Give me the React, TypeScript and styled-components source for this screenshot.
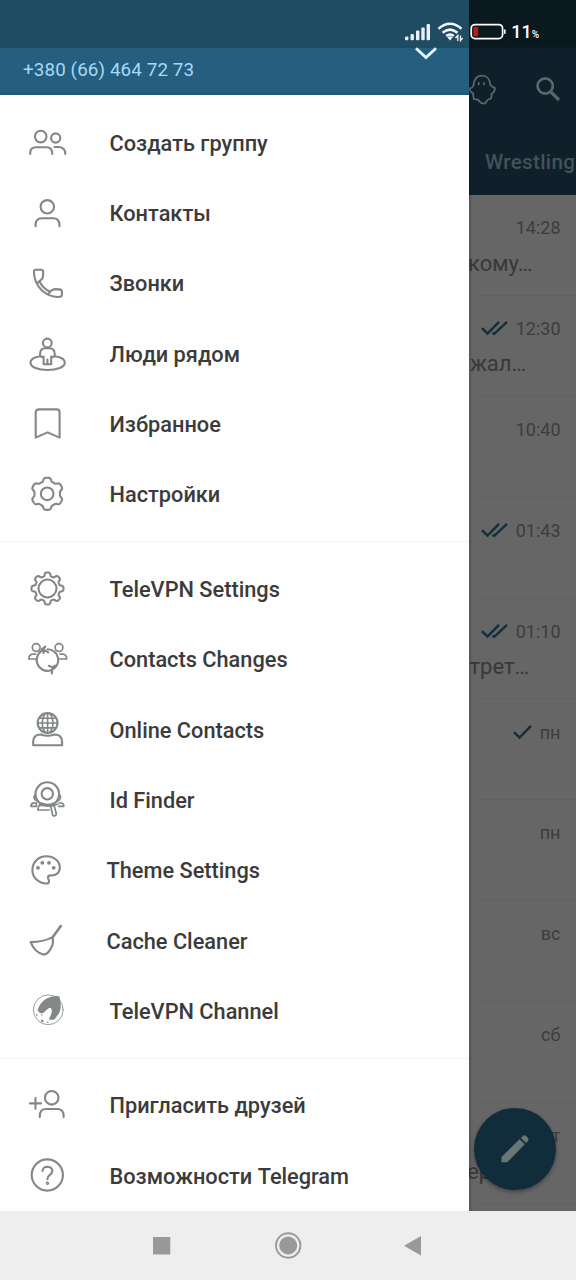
import React from 'react';
import styled, { createGlobalStyle } from 'styled-components';

const GlobalStyle = createGlobalStyle`
  *, *::before, *::after { box-sizing: border-box; }
  body { margin: 0; font-family: Roboto, sans-serif; background: #fff; }
  svg { display: block; overflow: visible; }
`;

const Screen = styled.div`
  position: relative;
  width: 576px;
  height: 1280px;
  overflow: hidden;
  display: flex;
  flex-direction: column;
`;

const Content = styled.div`
  display: flex;
  height: 1211px;
`;

const Drawer = styled.aside`
  width: 469px;
  flex: none;
  background: #fefefe;
`;

const Account = styled.header`
  height: 95px;
  padding-top: 48px;
  background: linear-gradient(#1f4c63 48px, #245f80 48px);
  border-bottom: 2px solid #25566f;
`;

const AccountRow = styled.div`
  display: flex;
  justify-content: space-between;
  padding: 0 32px 0 23px;
`;

const Phone = styled.span`
  font-size: 18.8px;
  line-height: 44px;
  letter-spacing: 0.12px;
  color: #a5d9f5;
`;

const Menu = styled.nav`
  padding-top: 13.6px;
`;

const MenuGroup = styled.div`
  & + & {
    margin-top: 10.5px;
    padding-top: 12.6px;
    border-top: 1px solid #f4f4f4;
  }
`;

const MenuItem = styled.div`
  display: flex;
  align-items: center;
  height: 70.35px;
  padding-left: 23px;
`;

const MenuIcon = styled.svg`
  width: 48px;
  height: 48px;
  flex: none;
  fill: none;
  stroke: #838788;
  stroke-width: 2.1;
  stroke-linecap: round;
  stroke-linejoin: round;
`;

const MenuLabel = styled.span<{ $shift?: number }>`
  margin-left: ${(p) => 38.5 - (p.$shift ?? 0)}px;
  font-size: 21.75px;
  font-weight: 500;
  line-height: 30px;
  color: #3b3b3b;
  white-space: nowrap;
`;

const Chats = styled.main`
  position: relative;
  width: 107px;
  overflow: hidden;
  background: #666;
`;

const DrawerShadow = styled.div`
  position: absolute;
  inset: 0 auto 0 0;
  width: 4px;
  background: linear-gradient(90deg, rgba(0, 0, 0, 0.18), transparent);
`;

const ChatsHeader = styled.header`
  height: 195px;
  padding-top: 48px;
  background: linear-gradient(#0a1920 46px, #0f202a 50px);
`;

const Actions = styled.div`
  display: flex;
  align-items: center;
  justify-content: space-between;
  height: 82px;
  padding-right: 15px;
`;

const Tab = styled.div`
  padding-left: 16px;
  font-size: 20.7px;
  font-weight: 500;
  line-height: 64px;
  letter-spacing: 0.3px;
  color: #465158;
  white-space: nowrap;
`;

const ChatRow = styled.div`
  height: 100.9px;
  padding-top: 20.6px;
  background: linear-gradient(#616161, #616161) 11px 100% / 100% 1px no-repeat;
`;

const Meta = styled.div`
  display: flex;
  align-items: center;
  justify-content: flex-end;
  gap: 8px;
  height: 24px;
  padding-right: 15.5px;
  font-size: 18px;
  color: #3d3d3d;
`;

const Preview = styled.div<{ $shift: number }>`
  margin: 9px 0 0 ${(p) => p.$shift}px;
  font-size: 22px;
  line-height: 30px;
  color: #383838;
  white-space: nowrap;
`;

const Compose = styled.div`
  position: absolute;
  left: 5px;
  top: 1108px;
  width: 82px;
  height: 82px;
  display: grid;
  place-items: center;
  border-radius: 50%;
  background: #112d3b;
  box-shadow: 0 2px 4px rgba(0, 0, 0, 0.35);
`;

const StatusBar = styled.div`
  position: absolute;
  top: 20px;
  right: 37px;
  height: 24px;
  display: flex;
  align-items: center;
  color: #fff;
`;

const Percent = styled.span`
  margin-left: 5px;
  margin-top: -1px;
  font-size: 18px;
  font-weight: 500;
  small { font-size: 10px; }
`;

const NavBar = styled.footer`
  height: 69px;
  flex: none;
  display: flex;
  justify-content: center;
  background: #eee;
`;

/** Outline of a cog with rounded teeth, the first one pointing up. */
function cog(cx: number, cy: number, teeth: number, mid: number, amp: number, sharp: number) {
  const pts: string[] = [];
  for (let i = 0; i < 240; i++) {
    const t = (i / 240) * Math.PI * 2;
    const r = mid + amp * Math.tanh(sharp * (Math.cos(teeth * t) + 0.05));
    pts.push(`${(cx + r * Math.sin(t)).toFixed(2)},${(cy - r * Math.cos(t)).toFixed(2)}`);
  }
  return `M${pts.join('L')}Z`;
}

const icons: Record<string, React.ReactNode> = {
  group: (
    <>
      <circle cx="17.7" cy="16.6" r="5.8" />
      <circle cx="32.7" cy="18" r="4.6" />
      <path d="M7.2 34V33Q7.2 27.2 13 27.2H23.5Q29.3 27.2 29.3 34M31.5 27H35Q42.3 27 42.3 34" />
    </>
  ),
  person: (
    <>
      <circle cx="24.3" cy="16.8" r="6.7" />
      <path d="M12.6 36.2V35Q12.6 28.3 19 28.3H30Q36.4 28.3 36.4 35V36.2" />
    </>
  ),
  phone: (
    <path d="M10.9 12Q10.9 9.8 13 9.8H18Q20.2 9.8 20.2 12L20 16.5Q19.8 19 16.4 21.2Q19.5 28 27 31.8Q29 29.3 32 29.1L36.5 29.4Q38.9 29.6 38.9 31.8V34.5Q38.9 36.7 36.5 36.9Q27 37.6 19 30.5Q11 22.5 10.9 12ZM16.4 21.2L14.5 22.8M27 31.8L25.5 34.3" />
  ),
  nearby: (
    <>
      <circle cx="24.3" cy="12" r="4.4" />
      <path d="M20.6 25.5V33.3H28.2V25.5M24.4 28.5V33M20.6 26Q17.2 26.5 17 23.5Q17 17.2 22.5 17.2H26.2Q31.8 17.2 31.8 23.5Q31.6 26.5 28.2 26" />
      <path d="M17.5 25.2C11 26 7.5 28.4 7.5 31.7C7.5 36 15 39 24.6 39S41.8 36 41.8 31.7C41.8 28.4 38 26 31.5 25.2" />
    </>
  ),
  bookmark: <path d="M12.7 36.6V11.5Q12.7 8.4 15.8 8.4H33.5Q36.6 8.4 36.6 11.5V36.6L24.6 31.4Z" />,
  settings: (
    <>
      <path d={cog(24.2, 22.8, 6, 14.4, 1.7, 2.2)} />
      <circle cx="24.2" cy="22.8" r="6.3" />
    </>
  ),
  vpnSettings: (
    <>
      <path d={cog(24.5, 22.5, 8, 14.2, 1.8, 2.2)} />
      <circle cx="24.5" cy="22.5" r="9" />
    </>
  ),
  changes: (
    <g strokeWidth="1.7">
      <circle cx="13.2" cy="11.6" r="3.9" />
      <circle cx="36" cy="11.6" r="3.9" />
      <path d="M13 23H5.8Q6 18.2 10 18.1H12.5M36.5 23H43.7Q43.5 18.2 39.5 18.1H37" />
      <path strokeWidth="2.1" d="M21.5 13.6A10.8 10.8 0 0 0 27.5 34.4M28 34.2A10.8 10.8 0 0 0 24.5 13.2M18.6 13.4L22.4 10.6M21.2 13.2L20.4 17M21.5 14.2L25.2 16.4M29.8 31.2L28.8 37.4M25.8 29.8L29.6 31.4L32 29.6" />
    </g>
  ),
  online: (
    <>
      <circle cx="24.6" cy="16" r="9.9" />
      <path strokeWidth="1.6" d="M24.6 6.2V25.8M15 16H34.4M16.8 11.2H32.4M16.8 20.9H32.4M22 6.6Q16.2 16 22 25.4M27.2 6.6Q33 16 27.2 25.4" />
      <path d="M10.2 38.2V34.5Q10.5 27.4 18 27.5Q24.6 30.1 31.2 27.5Q38.8 27.4 39.1 34.5V38.2Z" />
    </>
  ),
  finder: (
    <g strokeWidth="1.7">
      <circle cx="24.3" cy="17" r="11.8" strokeWidth="2.1" />
      <circle cx="24.3" cy="16.8" r="5.7" strokeWidth="2.1" />
      <path d="M12.5 17.5Q9.8 20 12 22.5L15 24.5M36 17.5Q38.8 20 36.6 22.5L33.8 24.5M8 29.3Q8 25.9 11.2 25.9L13.4 26V29.3ZM36 26H38Q41 26.3 40.8 29.3H35.6M17 27.5Q14.8 29.5 14.8 33H26M17.5 28.3H27.5L29.7 38.2Q30.5 39.6 32 38.7Q33.5 38 33.3 36.5L30.8 27.6M27 29.5L34.5 27.2" />
      <path strokeWidth="2.8" d="M18 26.5Q24.5 29.5 30.6 26.7" />
    </g>
  ),
  palette: (
    <>
      <path d="M23.5 36.5C15.5 36.5 9.4 30.5 9.4 22.9C9.4 15.1 15.6 9.3 23.2 9.3C31 9.3 36.8 14 36.8 20.5C36.8 25.8 33 28.8 27.5 28.4Q25 28.4 25 30.4C25 32.4 26.2 32.4 26 34.6Q25.8 36.5 23.5 36.5Z" />
      <g fill="#838788" stroke="none">
        <circle cx="15" cy="20.8" r="1.9" />
        <circle cx="19.3" cy="15.8" r="1.9" />
        <circle cx="26" cy="15.8" r="1.9" />
        <circle cx="30.7" cy="20.8" r="1.9" />
      </g>
    </>
  ),
  broom: (
    <>
      <path d="M7.6 24.1Q19.5 24.2 29.4 19.4Q31.2 25 27.8 30.6Q24.7 36.6 20.5 36.6Q11.7 34.3 7.6 24.1Z" />
      <path strokeWidth="2.6" d="M29.8 19L37.8 8" />
    </>
  ),
  channel: (
    <>
      <circle cx="25.3" cy="21.8" r="14.9" strokeWidth="0.8" />
      <path fill="#838788" stroke="none" d="M36.3 8.2C38 14.5 38.6 20 36 25.2L31.6 31.2Q28.5 32.6 25.8 31Q29.8 25 28.6 21.2Q27.5 18.6 25 20.8Q22.6 22.6 20.3 25Q17 26.3 14.6 22.6Q16.5 15 23.5 10.6Q29.5 7.2 36.3 8.2Z" />
      <g fill="#838788" stroke="none">
        <circle cx="13.8" cy="26.8" r=".9" />
        <circle cx="18.7" cy="27" r=".7" />
        <circle cx="19.3" cy="33" r="1.3" />
        <circle cx="24.7" cy="34.3" r=".8" />
      </g>
    </>
  ),
  invite: (
    <>
      <circle cx="28.7" cy="15.8" r="6.8" />
      <path d="M16.8 35.1V34Q16.8 27 23 27H34.2Q40.6 27 40.6 34V35.1M12.5 16V26.8M7 21.4H18" />
    </>
  ),
  help: (
    <>
      <circle cx="24.3" cy="22" r="15.6" />
      <path d="M19.5 17.9Q20 13.7 24.5 13.7Q29.4 13.9 29.3 18.1Q29.2 20.2 26.8 21.9Q24.4 23.7 24.4 26.2" />
      <circle cx="24.4" cy="30.3" r=".7" />
    </>
  ),
};

const groups: { icon: string; label: string; shift?: number }[][] = [
  [
    { icon: 'group', label: 'Создать группу' },
    { icon: 'person', label: 'Контакты' },
    { icon: 'phone', label: 'Звонки' },
    { icon: 'nearby', label: 'Люди рядом' },
    { icon: 'bookmark', label: 'Избранное' },
    { icon: 'settings', label: 'Настройки' },
  ],
  [
    { icon: 'vpnSettings', label: 'TeleVPN Settings' },
    { icon: 'changes', label: 'Contacts Changes' },
    { icon: 'online', label: 'Online Contacts' },
    { icon: 'finder', label: 'Id Finder' },
    { icon: 'palette', label: 'Theme Settings', shift: 3 },
    { icon: 'broom', label: 'Cache Cleaner', shift: 3 },
    { icon: 'channel', label: 'TeleVPN Channel' },
  ],
  [
    { icon: 'invite', label: 'Пригласить друзей' },
    { icon: 'help', label: 'Возможности Telegram' },
  ],
];

const chats: { time: string; ticks?: number; text?: string; shift?: number }[] = [
  { time: '14:28', text: 'кому…', shift: -1 },
  { time: '12:30', ticks: 2, text: 'жал…', shift: 1 },
  { time: '10:40' },
  { time: '01:43', ticks: 2 },
  { time: '01:10', ticks: 2, text: 'трет…', shift: 0.5 },
  { time: 'пн', ticks: 1 },
  { time: 'пн' },
  { time: 'вс' },
  { time: 'сб' },
  { time: 'пт', text: 'ер', shift: -2 },
];

const Ticks = ({ count }: { count: number }) => (
  <svg width={count === 2 ? 27 : 19} height="16" fill="none" stroke="#122f3c" strokeWidth="2.5">
    <path d="M1 8.2L6.5 13.6L18 1.8" />
    {count === 2 && <path d="M11.5 12.8L13.3 13.8L26 1.8" />}
  </svg>
);

const StatusIcons = () => (
  <svg width="101" height="24" fill="none">
    <g fill="#e9f1f5">
      <rect x="0" y="16.5" width="3.4" height="3.7" rx="1" />
      <rect x="5.5" y="14" width="3.4" height="6.2" rx="1" />
      <rect x="11" y="10.5" width="3.4" height="9.7" rx="1" />
      <rect x="16.3" y="7.5" width="3.4" height="12.7" rx="1" />
      <rect x="21.6" y="4" width="3.4" height="16.2" rx="1" />
    </g>
    <g stroke="#f2f7fa" strokeWidth="2.5">
      <path d="M33.5 8.8Q45 -1.2 56.5 8.8M37.5 12.8Q45 6.4 52.5 12.8M41.2 16Q45 13 48.8 16" />
    </g>
    <path fill="#f2f7fa" d="M42.3 17.3Q45 15.4 47.7 17.3L45 20.6Z" />
    <path stroke="#f2f7fa" strokeWidth="1.3" d="M52.8 21V15.5L50.5 18M55.5 15.5V20.5L57.6 18" />
    <rect x="66.2" y="4.6" width="31.4" height="14" rx="3.8" stroke="#fff" strokeWidth="1.7" />
    <rect x="68.3" y="6.9" width="4.8" height="9.4" rx="1.4" fill="#c81616" />
    <path d="M99.8 9.6V13.8" stroke="#fff" strokeWidth="1.6" />
  </svg>
);

export default function App() {
  return (
    <Screen>
      <GlobalStyle />
      <Content>
        <Drawer>
          <Account>
            <AccountRow>
              <Phone>+380 (66) 464 72 73</Phone>
              <svg width="22" height="14" fill="none" stroke="#e8f6ff" strokeWidth="2.8">
                <path d="M1 .2L11 9.6L21 .2" />
              </svg>
            </AccountRow>
          </Account>
          <Menu>
            {groups.map((items, i) => (
              <MenuGroup key={i}>
                {items.map((item) => (
                  <MenuItem key={item.label}>
                    <MenuIcon viewBox="0 0 48 48">{icons[item.icon]}</MenuIcon>
                    <MenuLabel $shift={item.shift}>{item.label}</MenuLabel>
                  </MenuItem>
                ))}
              </MenuGroup>
            ))}
          </Menu>
        </Drawer>
        <Chats>
          <ChatsHeader>
            <Actions>
              <svg width="27" height="32" fill="none" stroke="#5c666b" strokeWidth="1.8" strokeLinejoin="round">
                <path d="M4.5 12.5C4.5 6.5 8 2.7 13 2.7S21 6.5 21.3 12Q23.5 14 26 15.1Q25.5 19.5 22.3 21Q23.2 23.5 21.6 25.8Q18.5 25.5 16.6 29.8Q13.6 31.8 10.8 28.9Q9.5 26 5 26.2Q3.8 23 4.4 20.7Q1 19.5 .4 15.5Q3.5 15 4.5 12.5Z" />
                <path d="M9.8 9.3V12M15 9.3V12" />
              </svg>
              <svg width="26" height="26" fill="none" stroke="#5c666b">
                <circle cx="10.2" cy="10" r="7.6" strokeWidth="2.7" />
                <path d="M15.6 15.6L24 24" strokeWidth="3.2" />
              </svg>
            </Actions>
            <Tab>Wrestling</Tab>
          </ChatsHeader>
          {chats.map((chat, i) => (
            <ChatRow key={i}>
              <Meta>
                {chat.ticks && <Ticks count={chat.ticks} />}
                {chat.time}
              </Meta>
              {chat.text && <Preview $shift={chat.shift ?? 0}>{chat.text}</Preview>}
            </ChatRow>
          ))}
          <DrawerShadow />
          <Compose>
            <svg width="30" height="30" fill="#6a7576">
              <path d="M1.5 23L19.5 5.2L24.8 10.3L7.2 28.3H1.5ZM20.8 3.9L22.8 2Q24.5 .6 26.3 2.2L27.8 3.8Q29.3 5.5 27.8 7.2L26 9Z" />
            </svg>
          </Compose>
        </Chats>
      </Content>
      <StatusBar>
        <StatusIcons />
        <Percent>
          11<small>%</small>
        </Percent>
      </StatusBar>
      <NavBar>
        <svg width="576" height="69" fill="#999">
          <rect x="153" y="26" width="17.3" height="17.5" />
          <circle cx="288.2" cy="34.5" r="9" />
          <circle cx="288.2" cy="34.5" r="12.2" fill="none" stroke="#999" strokeWidth="1.9" />
          <path d="M404 34.7L421 25V44.5Z" />
        </svg>
      </NavBar>
    </Screen>
  );
}
